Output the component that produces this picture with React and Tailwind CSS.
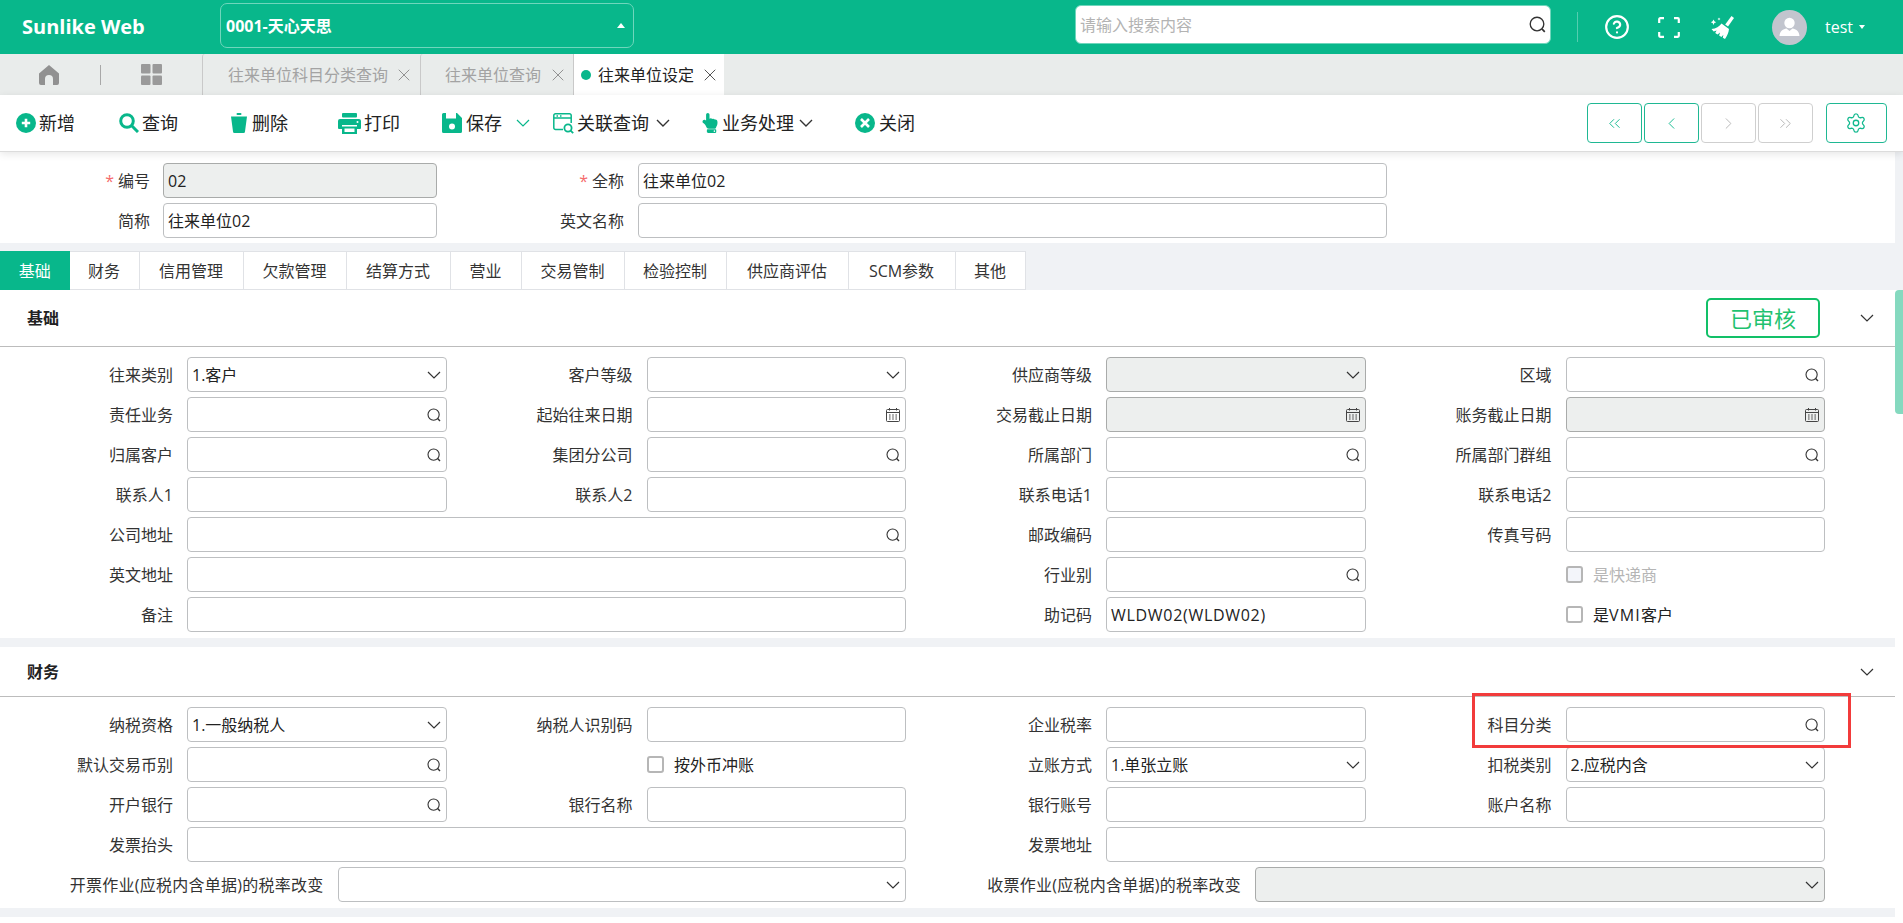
import React from "react";
import { ChevronLeft, ChevronRight, ChevronsLeft, ChevronsRight, Settings, X, CircleHelp } from "lucide-react";
import { FaHandPointUp } from "react-icons/fa";

const font = { fontFamily: '"Open Sans","Noto Sans CJK SC",sans-serif' };

const SearchIco = ({ size = 14 }) => (
  <svg viewBox="0 0 14 14" width={size} height={size} fill="none" stroke="#333" strokeWidth="1.1">
    <circle cx="6.6" cy="6.6" r="5.6" />
    <path d="M10.6 10.6 13 13" strokeWidth="1.4" />
  </svg>
);
const CalIco = () => (
  <svg viewBox="0 0 14 14" width="14" height="14" fill="none" stroke="#444" strokeWidth="1">
    <rect x="0.5" y="1.5" width="13" height="12" rx="1" />
    <path d="M0.5 4.5h13M3.5 0v2.5M10.5 0v2.5" />
    <path d="M3 7h1.6M6.2 7h1.6M9.4 7H11M3 9h1.6M6.2 9h1.6M9.4 9H11M3 11h1.6M6.2 11h1.6M9.4 11H11" strokeWidth="1" />
  </svg>
);
const Chev = ({ color = "#333", sw = 1.2, w = 14 }) => (
  <svg viewBox="0 0 14 8" width={w} height={(w * 8) / 14} fill="none" stroke={color} strokeWidth={sw}><path d="M1 1l6 6 6-6" /></svg>
);

function Field({ type = "text", value = "", disabled = false }) {
  return (
    <div className={`flex-1 min-w-0 h-[35px] rounded-[4px] border flex items-center pl-[4px] pr-[5px] text-[16px] leading-[24px] text-[#222] ${disabled ? "bg-[#edefee] border-[#a9abaa]" : "bg-white border-[#bdbfc1]"}`}>
      <span className="flex-1 whitespace-nowrap">{value}</span>
      {type === "search" && <SearchIco />}
      {type === "date" && <CalIco />}
      {type === "select" && <Chev />}
    </div>
  );
}

function Cell({ label, span = false, labelW = "w-[173px]", track = "", ...rest }) {
  return (
    <div className={`flex items-center pr-[13px] ${span ? "col-span-2" : ""}`}>
      <div className={`${labelW} ${track} shrink-0 text-right whitespace-nowrap text-[16px] leading-[24px] text-[#333]`}>{label}</div>
      <div className="w-[14px] shrink-0" />
      <Field {...rest} />
    </div>
  );
}

function Check({ label, disabled = false }) {
  return (
    <div className="flex items-center pl-[187.5px]">
      <div className={`w-[17px] h-[17px] rounded-[3px] border-2 border-[#b6b6b6] ${disabled ? "bg-[#f3f5fa]" : "bg-white"}`} />
      <span className={`ml-[10px] text-[16px] leading-[24px] whitespace-nowrap ${disabled ? "text-[#b5b5b5]" : "text-[#222]"}`}>{label}</span>
    </div>
  );
}

function Section({ title, tall = false, children }) {
  return (
    <div className="bg-white">
      <div className={`flex items-center justify-between border-b border-[#bcbcbc] pl-[27px] pr-[21px] ${tall ? "h-[57px]" : "h-[50px]"}`}>
        <div className="text-[16px] font-bold text-[#222] leading-[24px]">{title}</div>
        <div className="flex items-center">
          {tall && (
            <div className="w-[114px] h-[40px] mr-[40px] rounded-[5px] border-2 border-[#12c068] text-[#1fc270] text-[22px] leading-[36px] text-center">已审核</div>
          )}
          <Chev w={14} />
        </div>
      </div>
      <div className="grid grid-cols-[repeat(4,459.5px)] gap-y-[5px] pt-[10px] pb-[6px]">{children}</div>
    </div>
  );
}

const G = "#08b78b";
const IcoAdd = () => (
  <svg viewBox="0 0 20 20" width="20" height="20"><circle cx="10" cy="10" r="10" fill={G} /><path d="M10 5.8v8.4M5.8 10h8.4" stroke="#fff" strokeWidth="2.6" /></svg>
);
const IcoFind = () => (
  <svg viewBox="0 0 20 20" width="20" height="20" fill="none" stroke={G}><circle cx="8" cy="8" r="6.3" strokeWidth="3" /><path d="M12.5 12.5 19 19" strokeWidth="3" /></svg>
);
const IcoDel = () => (
  <svg viewBox="0 0 16 20" width="16" height="20" fill={G}><rect x="5.5" y="0" width="5" height="2" rx="1" /><path d="M0 3.5h16L14 18.5a1.5 1.5 0 0 1-1.5 1.5h-9A1.5 1.5 0 0 1 2 18.5z" /></svg>
);
const IcoPrint = () => (
  <svg viewBox="0 0 23 21" width="23" height="21" fill={G}><rect x="4" y="0" width="15" height="4.5" rx="1" /><path d="M2 6h19a2 2 0 0 1 2 2v7a1 1 0 0 1-1 1h-3v-4H4v4H1a1 1 0 0 1-1-1V8a2 2 0 0 1 2-2z" /><path d="M4 13.5h15V21H4zM6.5 15.5V19h10v-3.5z" fillRule="evenodd" /><circle cx="19.5" cy="9" r="1" fill="#fff" /></svg>
);
const IcoSave = () => (
  <svg viewBox="0 0 20 20" width="20" height="20"><path d="M1.5 0H15l5 5v13.5a1.5 1.5 0 0 1-1.5 1.5h-17A1.5 1.5 0 0 1 0 18.5v-17A1.5 1.5 0 0 1 1.5 0z" fill={G} /><rect x="4" y="0" width="10" height="5.5" fill="#fff" /><circle cx="10" cy="13.5" r="3" fill="#fff" /></svg>
);
const IcoRel = () => (
  <svg viewBox="0 0 21 21" width="21" height="21" fill="none" stroke={G} strokeWidth="1.5"><path d="M10 16.5H2.5a1.7 1.7 0 0 1-1.7-1.7V2.5A1.7 1.7 0 0 1 2.5.8h14a1.7 1.7 0 0 1 1.7 1.7V10" /><path d="M1 5h17" /><path d="M3.5 3h1.5M7 3h1.5" strokeWidth="1.4" /><circle cx="15" cy="15" r="3.6" strokeWidth="1.8" /><path d="m17.6 17.6 2.6 2.6" strokeWidth="1.8" /></svg>
);
const IcoClose = () => (
  <svg viewBox="0 0 20 20" width="20" height="20"><circle cx="10" cy="10" r="10" fill={G} /><path d="m6 6 8 8M14 6l-8 8" stroke="#fff" strokeWidth="2.6" /></svg>
);

const tools = [
  { w: "w-[103px]", gap: "gap-[3px]", icon: <IcoAdd />, t: "新增" },
  { w: "w-[112px]", gap: "gap-[3px]", icon: <IcoFind />, t: "查询" },
  { w: "w-[107px]", gap: "gap-[5px]", icon: <IcoDel />, t: "删除" },
  { w: "w-[104px]", gap: "gap-[3px]", icon: <IcoPrint />, t: "打印" },
  { w: "w-[111px]", gap: "gap-[4px]", icon: <IcoSave />, t: "保存", chev: <span className="ml-[10px] flex"><Chev color={G} w={14} /></span> },
  { w: "w-[147px]", gap: "gap-[3px]", icon: <IcoRel />, t: "关联查询", chev: <span className="ml-[4px] flex"><Chev sw={1.4} /></span> },
  { w: "w-[155px]", gap: "gap-[2px]", icon: <FaHandPointUp size={20} color={G} />, t: "业务处理", chev: <span className="ml-[3px] flex"><Chev sw={1.4} /></span> },
  { w: "w-[70px]", gap: "gap-[4px]", icon: <IcoClose />, t: "关闭" },
];

const formTabs = [
  ["基础", "w-[69.5px]"], ["财务", "w-[70px]"], ["信用管理", "w-[104px]"], ["欠款管理", "w-[103px]"], ["结算方式", "w-[104px]"],
  ["营业", "w-[71px]"], ["交易管制", "w-[103px]"], ["检验控制", "w-[102px]"], ["供应商评估", "w-[122px]"], ["SCM参数", "w-[107px]"], ["其他", "w-[70px]"],
];

function NavBtn({ on, children, cls = "w-[55.5px]" }) {
  return (
    <div className={`${cls} h-[40px] rounded-[4px] border flex items-center justify-center ${on ? "border-[#1fb893]" : "border-[#cfcfcf]"}`}>{children}</div>
  );
}

export default function App() {
  return (
    <div style={font} className="w-[1903px] h-[923px] overflow-hidden bg-[#f0f2f5] flex flex-col">
      {/* Header */}
      <div className="h-[54px] shrink-0 bg-[#08b78b] flex items-center text-white">
        <div className="w-[220px] pl-[22px] text-[20px] font-bold leading-[24px] whitespace-nowrap">Sunlike Web</div>
        <div className="w-[414px] h-[45px] mb-[3px] rounded-[7px] border border-[#6fd6bc] flex items-center pl-[5px] pr-[8px]">
          <span className="flex-1 font-bold text-[16px] leading-[24px]">0001-天心天思</span>
          <span className="w-0 h-0 border-x-[4.5px] border-x-transparent border-b-[5px] border-b-white" />
        </div>
        <div className="ml-[441px] w-[476px] h-[39px] mb-[5px] rounded-[6px] bg-white border border-[#6fd6bc] flex items-center pl-[4px] pr-[4px]">
          <span className="flex-1 text-[16px] leading-[24px] text-[#b3b3b3]">请输入搜索内容</span>
          <SearchIco size={17} />
        </div>
        <div className="ml-[26px] w-px h-[30px] bg-[#55cdb0]" />
        <CircleHelp size={26} strokeWidth={2} className="ml-[26px]" />
        <svg viewBox="0 0 22 21" width="22" height="21" fill="none" stroke="#fff" strokeWidth="2.2" className="ml-[28px]">
          <path d="M1.2 6V2.2a1 1 0 0 1 1-1H6M16 1.2h3.800a1 1 0 0 1 1 1V6M20.800 15v3.800a1 1 0 0 1-1 1H16M6 19.800H2.200a1 1 0 0 1-1-1V15" />
        </svg>
        <svg viewBox="0 0 24 23" width="24" height="23" fill="#fff" className="ml-[30px]">
          <path d="M21.500 0 24 2l-6 8.500-2.800-2.100z" />
          <path d="M11.500 7.500 19 13c-.3 3.800-2 7-4 10l-2.200-1.300.6-3-2 2.300-2.300-1.500 1-2.900-2.600 1.900L5.200 17l1.400-2.500-2.900 1L1.500 13c4.500-.3 8-2.400 10-5.500z" />
          <path d="M3.500 3.500l.9 1.800 1.800.9-1.800.9-.9 1.800-.9-1.800-1.800-.9 1.800-.9zM9 1.500l.5 1 1 .5-1 .5-.5 1-.5-1-1-.5 1-.5z" />
        </svg>
        <div className="ml-[38px] w-[35px] h-[35px] rounded-full bg-[#c2c5ce] overflow-hidden flex items-center justify-center">
          <svg viewBox="0 0 35 35" width="35" height="35" fill="#fff"><circle cx="17.500" cy="13" r="5.200" /><path d="M7.500 26c.3-5 3.800-6.800 7-7.400l3 2.400 3-2.400c3.200.6 6.700 2.400 7 7.400z" /></svg>
        </div>
        <span className="ml-[18px] text-[16px] leading-[24px]">test</span>
        <span className="ml-[6px] w-0 h-0 border-x-[3.5px] border-x-transparent border-t-[4px] border-t-white" />
      </div>

      {/* Page tabs */}
      <div className="h-[41px] shrink-0 bg-[#e9eceb] flex items-stretch">
        <div className="w-[100px] flex items-center pl-[39px]">
          <svg viewBox="0 0 20 20" width="20" height="20" fill="#919191"><path d="M10 0 20 8.500V18a2 2 0 0 1-2 2h-4v-6a4 4 0 0 0-8 0v6H2a2 2 0 0 1-2-2V8.500z" /></svg>
        </div>
        <div className="flex items-center"><div className="w-px h-[20px] bg-[#a8a8a8]" /></div>
        <div className="w-[101px] flex items-center pl-[40px]">
          <svg viewBox="0 0 21 21" width="21" height="21" fill="#9a9a9a"><rect width="9.500" height="9.500" rx="1" /><rect x="11.500" width="9.500" height="9.500" rx="1" /><rect y="11.500" width="9.500" height="9.500" rx="1" /><rect x="11.500" y="11.500" width="9.500" height="9.500" rx="1" /></svg>
        </div>
        <div className="w-[218px] border-l border-[#c9c9c9] rounded-tl-[3px] flex items-center pl-[25px] text-[16px] leading-[24px] text-[#a3a3a3] whitespace-nowrap">
          <span>往来单位科目分类查询</span>
          <X size={20} strokeWidth={1.1} color="#8a8a8a" className="ml-[6px]" />
        </div>
        <div className="w-[153px] border-l border-[#c9c9c9] rounded-tl-[3px] flex items-center pl-[24px] text-[16px] leading-[24px] text-[#a3a3a3] whitespace-nowrap">
          <span>往来单位查询</span>
          <X size={20} strokeWidth={1.1} color="#8a8a8a" className="ml-[7px]" />
        </div>
        <div className="w-[151px] bg-white border-l border-[#c9c9c9] flex items-center pl-[7px] text-[16px] leading-[24px] text-[#222] whitespace-nowrap">
          <span className="w-[10px] h-[10px] rounded-full bg-[#08b78b] mr-[7px]" />
          <span>往来单位设定</span>
          <X size={20} strokeWidth={1.2} color="#555" className="ml-[6px]" />
        </div>
      </div>

      {/* Toolbar */}
      <div className="relative z-10 h-[57px] shrink-0 bg-white border-b border-[#dcdcdc] shadow-[0_2px_8px_rgba(0,0,0,0.10)] flex items-center pl-[16px] pr-[16.500px] text-[18px] leading-[24px] text-[#222]">
        {tools.map((t) => (
          <div key={t.t} className={`${t.w} shrink-0 flex items-center ${t.gap}`}>
            {t.icon}
            <span className="whitespace-nowrap">{t.t}</span>
            {t.chev}
          </div>
        ))}
        <div className="flex-1" />
        <div className="flex gap-[1.500px]">
          <NavBtn on><ChevronsLeft size={19} strokeWidth={1.2} color="#12b98f" /></NavBtn>
          <NavBtn on><ChevronLeft size={19} strokeWidth={1.2} color="#12b98f" /></NavBtn>
          <NavBtn><ChevronRight size={19} strokeWidth={1.2} color="#b5b5b5" /></NavBtn>
          <NavBtn><ChevronsRight size={19} strokeWidth={1.2} color="#b5b5b5" /></NavBtn>
        </div>
        <div className="ml-[12.500px]"><NavBtn on cls="w-[61px]"><Settings size={22} strokeWidth={1.4} color="#12b98f" /></NavBtn></div>
      </div>

      {/* Main */}
      <div className="flex flex-1 min-h-0">
        <div className="w-[1895px] shrink-0">
          {/* Header form */}
          <div className="bg-white h-[91px] pt-[11px] flex flex-col gap-[5px]">
            {[
              ["编号", "02", true, "全称", "往来单位02"],
              ["简称", "往来单位02", false, "英文名称", ""],
            ].map(([a, v, dis, b, w], i) => (
              <div key={a} className="flex items-center text-[16px] leading-[24px]">
                <div className="w-[150px] text-right text-[#333]">
                  {i === 0 && <span className="text-[#f56c6c] mr-[4px]">*</span>}{a}
                </div>
                <div className="ml-[13px] w-[274px] flex"><Field value={v} disabled={dis} /></div>
                <div className="w-[187px] text-right text-[#333]">
                  {i === 0 && <span className="text-[#f56c6c] mr-[4px]">*</span>}{b}
                </div>
                <div className="ml-[14px] w-[749px] flex"><Field value={w} /></div>
              </div>
            ))}
          </div>

          {/* Form tabs */}
          <div className="mt-[8px] h-[39px] flex">
            {formTabs.map(([t, w], i) => (
              <div key={t} className={`${w} h-full flex items-center justify-center text-[16px] leading-[24px] ${i === 0 ? "bg-[#08b78b] text-white" : "bg-white text-[#333] border-r border-y border-[#e0e2e6]"}`}>{t}</div>
            ))}
          </div>

          <Section title="基础" tall>
            <Cell label="往来类别" type="select" value="1.客户" />
            <Cell label="客户等级" type="select" />
            <Cell label="供应商等级" type="select" disabled />
            <Cell label="区域" type="search" />

            <Cell label="责任业务" type="search" />
            <Cell label="起始往来日期" type="date" />
            <Cell label="交易截止日期" type="date" disabled />
            <Cell label="账务截止日期" type="date" disabled />

            <Cell label="归属客户" type="search" />
            <Cell label="集团分公司" type="search" />
            <Cell label="所属部门" type="search" />
            <Cell label="所属部门群组" type="search" />

            <Cell label="联系人1" />
            <Cell label="联系人2" />
            <Cell label="联系电话1" />
            <Cell label="联系电话2" />

            <Cell label="公司地址" type="search" span />
            <Cell label="邮政编码" />
            <Cell label="传真号码" />

            <Cell label="英文地址" span />
            <Cell label="行业别" type="search" />
            <Check label="是快递商" disabled />

            <Cell label="备注" span />
            <Cell label="助记码" value={<span className="tracking-[0.7px]">WLDW02(WLDW02)</span>} />
            <Check label={<>是<span className="tracking-[1.2px]">VMI</span>客户</>} />
          </Section>

          <div className="h-[9px]" />

          <Section title="财务">
            <Cell label="纳税资格" type="select" value="1.一般纳税人" />
            <Cell label="纳税人识别码" />
            <Cell label="企业税率" />
            <div className="relative grid">
              <Cell label="科目分类" type="search" />
              <div className="absolute left-[93px] top-[-14px] w-[379px] h-[55px] border-[3px] border-[#f23b3b] pointer-events-none" />
            </div>

            <Cell label="默认交易币别" type="search" />
            <Check label="按外币冲账" />
            <Cell label="立账方式" type="select" value="1.单张立账" />
            <Cell label="扣税类别" type="select" value="2.应税内含" />

            <Cell label="开户银行" type="search" />
            <Cell label="银行名称" />
            <Cell label="银行账号" />
            <Cell label="账户名称" />

            <Cell label="发票抬头" span />
            <Cell label="发票地址" span />

            <Cell label="开票作业(应税内含单据)的税率改变" type="select" span labelW="w-[323.5px]" track="tracking-[0.25px]" />
            <Cell label="收票作业(应税内含单据)的税率改变" type="select" disabled span labelW="w-[322px]" track="tracking-[0.25px]" />
          </Section>

          <div className="h-[9px]" />
          <div className="bg-white h-[20px]" />
        </div>
        {/* Scrollbar */}
        <div className="flex-1 flex flex-col">
          <div className="h-[138px] bg-[#f0f2f5]" />
          <div className="flex-1 bg-white">
            <div className="h-[124px] rounded-l-[4px] bg-[#85d9bf]" />
          </div>
        </div>
      </div>
    </div>
  );
}
